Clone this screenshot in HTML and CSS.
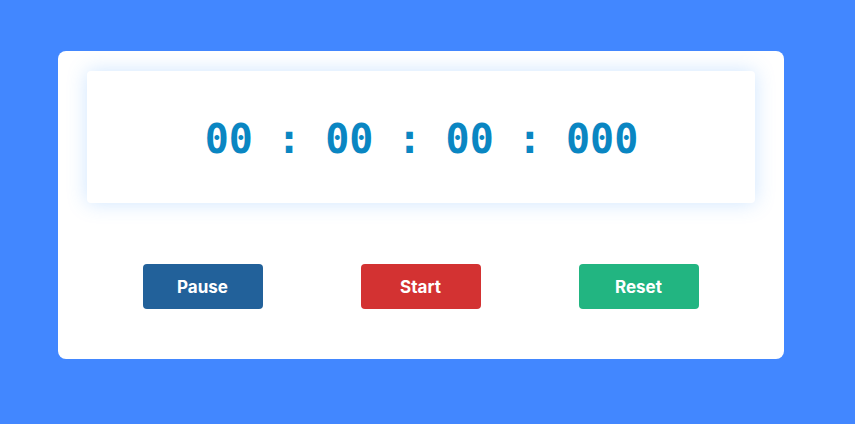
FILE: index.html
```html
<!DOCTYPE html>
<html>
<head>
<meta charset="utf-8">
<link rel="stylesheet" href="styles.css">
</head>
<body>
<div class="page">
  <div class="card">
    <div class="display">00 : 00 : 00 : 000</div>
    <div class="buttons">
      <button class="btn pause">Pause</button>
      <button class="btn start">Start</button>
      <button class="btn reset">Reset</button>
    </div>
  </div>
</div>
</body>
</html>
```
FILE: styles.css
```css
html, body {
  margin: 0;
  padding: 0;
}
body {
  background: #4287ff;
  width: 855px;
  height: 424px;
  overflow: hidden;
}
.page {
  padding: 51px 0 0 58px;
}
.card {
  width: 726px;
  height: 308px;
  box-sizing: border-box;
  background: #ffffff;
  border-radius: 8px;
  padding: 20px 29px 0;
}
.display {
  height: 132px;
  background: #ffffff;
  border-radius: 4px;
  box-shadow: 0 0 20px rgba(60, 150, 255, 0.25);
  display: flex;
  align-items: center;
  justify-content: center;
  font-family: "DejaVu Sans Mono", monospace;
  font-weight: bold;
  font-size: 40px;
  color: #0a86c2;
  padding: 3px 0 0 1px;
  box-sizing: border-box;
}
.buttons {
  display: flex;
  justify-content: center;
  gap: 98px;
  margin-top: 61px;
  padding-right: 1px;
}
.btn {
  width: 120px;
  height: 45px;
  border: none;
  border-radius: 4px;
  color: #ffffff;
  font-family: Inter, sans-serif;
  font-weight: 700;
  font-size: 17px;
  padding: 1px 0 0;
}
.pause { background: #22619a; }
.start { background: #d33232; }
.reset { background: #22b581; }
```
